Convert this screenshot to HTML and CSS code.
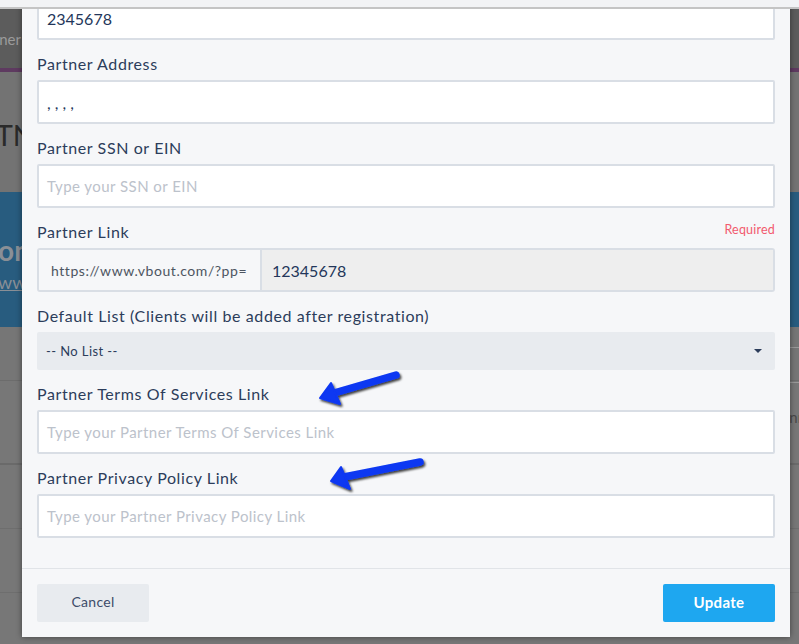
FILE: index.html
```html
<!DOCTYPE html>
<html>
<head>
<meta charset="utf-8">
<link rel="stylesheet" href="styles.css">
</head>
<body>
<div class="page">
  <div class="header"><div class="edge"><span class="tab">Partner</span></div></div>
  <div class="accent"></div>
  <div class="titlebar"><div class="edge"><span class="title">PARTN</span></div></div>
  <div class="banner">
    <div class="edge"><span class="banner-title">Become a Partner on</span></div>
    <div class="banner-link">www.vbout.com</div>
  </div>
  <div class="toolbar"><div class="toolbox"></div></div>
  <div class="tablehead"><span class="th">Conn</span></div>
  <div class="row"></div>
  <div class="row"></div>
</div>

<div class="topstrip"></div>

<div class="modal">
  <div class="modal-body">
    <div class="group">
      <div class="input filled">2345678</div>
    </div>
    <div class="group">
      <label class="label">Partner Address</label>
      <div class="input filled">, , , ,</div>
    </div>
    <div class="group">
      <label class="label">Partner SSN or EIN</label>
      <div class="input placeholder">Type your SSN or EIN</div>
    </div>
    <div class="group">
      <div class="label-row">
        <label class="label">Partner Link</label>
        <span class="required">Required</span>
      </div>
      <div class="input-group">
        <span class="addon">https://www.vbout.com/?pp=</span>
        <span class="addon-input">12345678</span>
      </div>
    </div>
    <div class="group">
      <label class="label">Default List (Clients will be added after registration)</label>
      <div class="select"><span>-- No List --</span><span class="caret"></span></div>
    </div>
    <div class="group">
      <label class="label">Partner Terms Of Services Link</label>
      <div class="input placeholder">Type your Partner Terms Of Services Link</div>
    </div>
    <div class="group last">
      <label class="label">Partner Privacy Policy Link</label>
      <div class="input placeholder">Type your Partner Privacy Policy Link</div>
    </div>
  </div>
  <div class="modal-footer">
    <button class="btn btn-cancel">Cancel</button>
    <button class="btn btn-update">Update</button>
  </div>
</div>

<svg class="arrows" width="799" height="644" viewBox="0 0 799 644">
  <defs>
    <filter id="sh" x="-20%" y="-50%" width="140%" height="200%">
      <feDropShadow dx="1.5" dy="2" stdDeviation="1.2" flood-color="#000" flood-opacity="0.75"/>
    </filter>
  </defs>
  <g filter="url(#sh)" fill="#0a37f2" stroke="#0a37f2">
    <line x1="396" y1="375" x2="334" y2="393" stroke-width="7.5" stroke-linecap="round"/>
    <polygon points="320,398 331,383 340,404" stroke-width="2" stroke-linejoin="round"/>
    <line x1="420" y1="462" x2="344" y2="477" stroke-width="7.5" stroke-linecap="round"/>
    <polygon points="331,481 341,467 350,489" stroke-width="2" stroke-linejoin="round"/>
  </g>
</svg>
</body>
</html>
```

FILE: styles.css
```css
html, body {
  margin: 0;
  padding: 0;
}
body {
  width: 799px;
  height: 644px;
  overflow: hidden;
  position: relative;
  background: #777777;
  font-family: Lato, "Open Sans", "Liberation Sans", sans-serif;
}

/* dimmed page behind modal */
.page {
  display: flex;
  flex-direction: column;
  padding-top: 9px;
}
.edge {
  width: 22px;
  display: flex;
  justify-content: flex-end;
  white-space: nowrap;
}
.header {
  height: 59px;
  background: #5c5c5c;
  display: flex;
  align-items: center;
  color: #9b9b9b;
  font-size: 15px;
}
.tab {
  margin-top: 0;
  margin-right: 1px;
}
.accent {
  height: 4px;
  background: #5e3a60;
}
.titlebar {
  height: 120px;
  background: #737373;
  display: flex;
  align-items: center;
}
.title {
  font-size: 29px;
  color: #2a2a2a;
  margin-right: -13px;
  margin-top: 4px;
}
.banner {
  height: 135px;
  background: #285c7f;
  display: flex;
  flex-direction: column;
  justify-content: center;
}
.banner-title {
  font-size: 28px;
  font-weight: 700;
  color: #8a8f96;
  margin-top: 6px;
  margin-right: -8px;
}
.banner-link {
  margin-left: -2px;
  font-size: 18px;
  color: #8a8f96;
  text-decoration: underline;
  margin-top: 4px;
}
.toolbar {
  height: 53px;
  border-bottom: 1px solid #6c6c6c;
  background: #767676;
  display: flex;
  justify-content: flex-end;
  align-items: center;
}
.toolbox {
  width: 20px;
  height: 34px;
  margin-top: 22px;
  border: 1px solid #9a9a9a;
  border-right: none;
  margin-right: -8px;
}
.tablehead {
  height: 82px;
  display: flex;
  align-items: center;
  border-bottom: 2px solid #6a6a6a;
  color: #4a4a4a;
  font-size: 15px;
}
.th {
  margin-left: 771px;
  margin-top: -10px;
}
.row {
  height: 63px;
  border-bottom: 1px solid #6e6e6e;
}

.topstrip {
  position: absolute;
  left: 0;
  top: 0;
  width: 799px;
  height: 7px;
  background: #f2f3f5;
  border-bottom: 2px solid #c4c4c4;
  z-index: 5;
}

/* modal */
.modal {
  position: absolute;
  left: 22px;
  top: -19px;
  width: 768px;
  background: #f6f7f9;
  box-shadow: 0 0 6px rgba(0, 0, 0, 0.45);
  z-index: 2;
}
.modal-body {
  padding: 15px 15px 30px 15px;
  display: flex;
  flex-direction: column;
  gap: 14px;
}
.group {
  display: flex;
  flex-direction: column;
}
.label {
  display: block;
  font-size: 16px;
  letter-spacing: 0.6px;
  line-height: 20px;
  color: #2c3d5b;
  margin-bottom: 6px;
}
.label-row {
  display: flex;
  justify-content: space-between;
  align-items: flex-start;
}
.required {
  font-size: 12.5px;
  letter-spacing: 0.2px;
  line-height: 16px;
  color: #f25a6e;
}
.input {
  box-sizing: border-box;
  height: 44px;
  background: #ffffff;
  border: 2px solid #d9dee5;
  border-radius: 2px;
  padding: 0 8px;
  display: flex;
  align-items: center;
  font-size: 16px;
}
.filled {
  color: #23365a;
}
.placeholder {
  color: #bcc2cb;
  font-size: 15px;
  letter-spacing: 0.45px;
}
.input-group {
  box-sizing: border-box;
  height: 44px;
  display: flex;
  border: 2px solid #d9dee5;
  border-radius: 3px;
  overflow: hidden;
}
.addon {
  width: 209px;
  padding: 0 0 0 12px;
  background: #f6f7f9;
  border-right: 2px solid #d9dee5;
  display: flex;
  align-items: center;
  font-size: 14px;
  letter-spacing: 0.55px;
  color: #4d5561;
  white-space: nowrap;
}
.addon-input {
  flex: 1;
  background: #eeeeee;
  display: flex;
  align-items: center;
  padding-left: 10px;
  font-size: 16px;
  color: #23365a;
}
.select {
  box-sizing: border-box;
  height: 38px;
  background: #e8ebef;
  border-radius: 2px;
  display: flex;
  align-items: center;
  justify-content: space-between;
  padding: 0 13px 0 9px;
  font-size: 13px;
  letter-spacing: 0.4px;
  color: #2c3d5b;
}
.caret {
  width: 0;
  height: 0;
  border-left: 4px solid transparent;
  border-right: 4px solid transparent;
  border-top: 4px solid #2c3d5b;
}
.modal-footer {
  border-top: 1px solid #e1e4e8;
  padding: 15px;
  display: flex;
  justify-content: space-between;
}
.btn {
  height: 38px;
  width: 112px;
  border: none;
  border-radius: 2px;
  font-family: Lato, "Open Sans", "Liberation Sans", sans-serif;
  font-size: 14px;
  letter-spacing: 0.3px;
  padding: 0 0 3px 0;
}
.btn-cancel {
  background: #e8ebef;
  color: #3d4c69;
}
.btn-update {
  background: #1ea7f0;
  color: #ffffff;
  font-weight: 700;
  font-size: 15px;
}

.arrows {
  position: absolute;
  left: 0;
  top: 0;
  z-index: 4;
  pointer-events: none;
}
```
